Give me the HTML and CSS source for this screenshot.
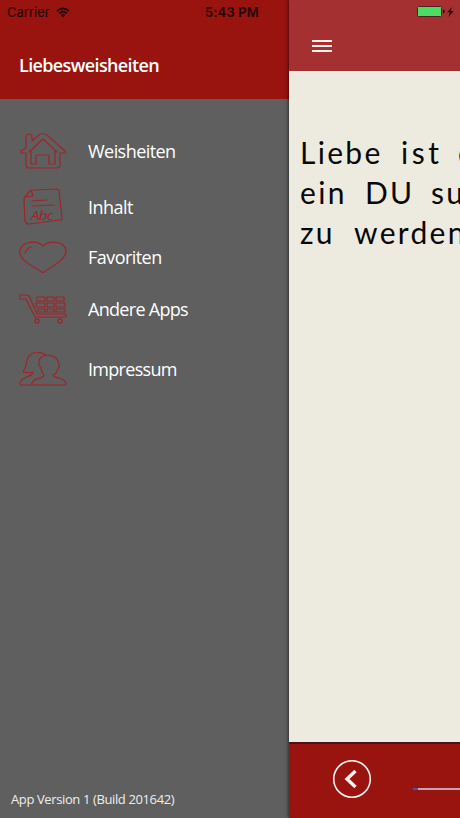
FILE: index.html
```html
<!DOCTYPE html>
<html lang="de">
<head>
    <meta charset="UTF-8">
    <meta name="viewport" content="width=device-width, initial-scale=1.0">
    <title>Liebesweisheiten</title>
    <link rel="stylesheet" href="styles.css">
</head>
<body>
    <div class="app">
        <nav class="menu">
            <header class="menu-header">
                <h1>Liebesweisheiten</h1>
            </header>

            <ul class="menu-list">
                <li class="home">
                    <svg class="icon" width="48" height="38" viewBox="0 0 48 38">
                        <path d="M7 16V5q0-3 3-3t3 3v4l7-6q4-3 8 0l18 16q1 2 0 2h-5v12q0 3-3 3H10q-3 0-3-3V21H2q-1-1 0-2z"/>
                        <path d="M10 20L24 7l14 13M12 19v13h5v-8q0-1 1-1h11q1 0 1 1v8h6V19"/>
                    </svg>
                    <span>Weisheiten</span>
                </li>
                <li class="content">
                    <svg class="icon" width="48" height="38" viewBox="0 0 48 38">
                        <path d="M6 9l5-6q1-1 3-1l24-1q2 0 2 2l3 27q0 2-2 2L10 36q-3 0-4-3L5 12q0-2 1-3l8-1-2-6"/>
                        <path d="M13 13l15-1M13 18l22-1"/>
                        <text class="icon-text" x="12" y="32" textLength="22" lengthAdjust="spacingAndGlyphs">Abc</text>
                    </svg>
                    <span>Inhalt</span>
                </li>
                <li class="favorites">
                    <svg class="icon" width="48" height="32" viewBox="0 0 48 32">
                        <path d="M24 5C18-1 4 0 1 9c-2 9 10 15 22 22q1 1 2 0C36 24 48 17 47 9 45 0 30-1 24 5z"/>
                        <path d="M6 12c1-3 3-5 6-6"/>
                    </svg>
                    <span>Favoriten</span>
                </li>
                <li class="apps">
                    <svg class="icon" width="48" height="30" viewBox="0 0 48 30">
                        <path d="M1 1h6q3 0 4 3l7 16h29v3H16L7 5H1q-1-2 0-4z"/>
                        <path d="M18 3h8v4h-8zM28 3h7v4h-7zM37 3h8v4h-8zM17 9h9v4h-9zM28 9h7v4h-7zM37 9h9v4h-9zM19 15h7v3h-7zM28 15h7v3h-7zM37 15h9v3h-9z"/>
                        <circle cx="18" cy="27" r="2.2"/>
                        <circle cx="41" cy="27" r="2.2"/>
                    </svg>
                    <span>Andere Apps</span>
                </li>
                <li class="imprint">
                    <svg class="icon" width="48" height="36" viewBox="0 0 48 36">
                        <path d="M27 4C20 0 11 0 8 9c-1 6-1 8-4 12 3 1 6 1 10 0 1 5-13 4-13 12q0 1 2 1h10"/>
                        <path d="M25 24c-2-2-3-4-3-7q-3-3-2-6c-1-9 18-9 19 0q3 4 0 7c-1 3-2 5-5 6 0 4 13 2 13 9q0 1-2 1H14q-2 0-1-2c2-6 12-4 12-8z"/>
                    </svg>
                    <span>Impressum</span>
                </li>
            </ul>

            <footer class="version">App Version 1 (Build 201642)</footer>
        </nav>

        <main class="page">
            <header class="page-header">
                <div class="burger"><i></i><i></i><i></i></div>
            </header>
            <div class="quote">
                <p><span class="w-liebe">Liebe</span><span class="w-ist">ist</span><span>das</span></p>
                <p><span class="w-ein">ein</span><span class="w-du">DU</span><span>suchen</span></p>
                <p><span class="w-zu">zu</span><span>werden</span></p>
            </div>
            <footer class="player">
                <svg class="prev" width="40" height="40" viewBox="0 0 40 40">
                    <circle cx="20" cy="20" r="18.3"/>
                    <path d="M23.500 12L15 20l8.500 8"/>
                </svg>
                <div class="progress"></div>
            </footer>
        </main>

        <div class="status">
            <span class="carrier">Carrier</span>
            <svg class="wifi" width="14" height="11" viewBox="0 0 14 11">
                <path d="M1 4q6-5 12 0M3.2 6.3q3.800-3 7.600 0"/>
                <path class="dot" d="M4.600 8q2.400-1.800 4.800 0L7 10.500z"/>
            </svg>
            <span class="time">5:43 PM</span>
            <svg class="battery" width="38" height="12" viewBox="0 0 38 12">
                <rect x=".5" y=".5" width="24" height="10" rx="1"/>
                <path d="M26 3.500q4 2 0 4zM35 1l-5 5.500h3L31.500 11l5-6h-3z"/>
            </svg>
        </div>
    </div>
</body>
</html>
```
FILE: styles.css
```css
* {
    box-sizing: border-box;
}
body {
    margin: 0;
    font-family: "Open Sans", "Liberation Sans", sans-serif;
    background-color: #5f5f5f;
}
.app {
    position: relative;
    display: flex;
    width: 460px;
    height: 818px;
    overflow: hidden;
}

/* side menu */
.menu {
    display: flex;
    flex-direction: column;
    width: 289px;
    flex: none;
    color: white;
    background-color: #5f5f5f;
}
.menu-header {
    height: 99px;
    padding: 52px 0 0 19px;
    background-color: #99130f;
}
h1 {
    margin: 0;
    font-size: 18px;
    line-height: 27px;
    font-weight: 600;
    letter-spacing: -0.63px;
}
.menu-list {
    flex: 1;
    margin: 0;
    padding: 24px 0 0 19px;
    list-style: none;
}
.menu-list li {
    display: flex;
    align-items: center;
    gap: 21px;
    height: 60px;
    font-size: 18px;
    letter-spacing: -0.55px;
}
.menu-list .home {
    height: 56px;
}
.menu-list .content {
    height: 55px;
}
.menu-list .favorites {
    height: 45px;
}
.menu-list .apps,
.menu-list .imprint {
    letter-spacing: -0.7px;
}
.icon {
    fill: none;
    stroke: #9c262a;
    stroke-width: 1.2;
    stroke-linejoin: round;
    stroke-linecap: round;
}
.icon-text {
    font: italic 13px "Open Sans", sans-serif;
    fill: #9c262a;
    stroke: none;
}
.version {
    padding: 0 0 10px 11px;
    font-size: 13px;
    line-height: 18px;
    letter-spacing: -0.38px;
    color: #eee;
}

/* opened page */
.page {
    display: flex;
    flex-direction: column;
    width: 360px;
    flex: none;
    background-color: #edebdf;
    box-shadow: 0 0 4px rgba(0, 0, 0, 0.8);
}
.page-header {
    height: 71px;
    padding: 40px 0 0 23px;
    background-color: #a53032;
}
.burger {
    display: flex;
    flex-direction: column;
    gap: 3px;
    width: 20px;
}
.burger i {
    height: 2px;
    background-color: #fff0ed;
}
.quote {
    flex: 1;
    padding: 61px 0 0 11px;
    font-family: Lato, sans-serif;
    font-size: 30px;
    color: #080808;
}
.quote p {
    display: flex;
    gap: 19px;
    margin: 0;
    line-height: 40px;
    letter-spacing: 2.3px;
    white-space: nowrap;
}
.quote .w-liebe {
    width: 82px;
}
.quote .w-ist {
    width: 38px;
    letter-spacing: 3.5px;
}
.quote .w-ein {
    width: 46px;
}
.quote .w-du {
    width: 47px;
}
.quote .w-zu {
    width: 35px;
}
.player {
    display: flex;
    align-items: flex-start;
    height: 76px;
    padding: 15px 0 0 43px;
    border-top: 2px solid #4b1315;
    background-color: #99130f;
}
.prev {
    flex: none;
    fill: none;
    stroke: #fff0ee;
    stroke-width: 1.6;
}
.prev path {
    stroke-width: 3.4;
}
.progress {
    width: 200px;
    height: 2px;
    margin: 29px 0 0 41px;
    background: linear-gradient(to right, #345bc5 5px, #c5a5b0 5px);
}

/* status bar lies over both panels */
.status {
    position: absolute;
    top: 0;
    left: 0;
    display: flex;
    align-items: center;
    width: 460px;
    height: 24px;
    padding-left: 7px;
    font-family: Inter, sans-serif;
    font-size: 13px;
    color: #210505;
}
.carrier {
    width: 49px;
}
.wifi {
    fill: none;
    stroke: #210505;
    stroke-width: 1.8;
}
.wifi .dot {
    fill: #210505;
    stroke: none;
}
.time {
    width: 56px;
    margin-left: 135px;
    font-weight: 600;
    letter-spacing: 0.15px;
    white-space: nowrap;
}
.battery {
    margin-left: 156px;
    fill: #210505;
}
.battery rect {
    fill: #4cdb63;
    stroke: #512022;
}
```
